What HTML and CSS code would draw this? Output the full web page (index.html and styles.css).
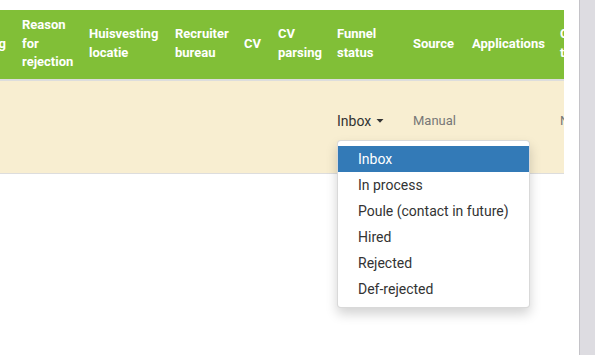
FILE: index.html
```html
<!DOCTYPE html>
<html>
<head>
<meta charset="utf-8">
<link rel="stylesheet" href="styles.css">
</head>
<body>
<div class="page">
  <main class="main">
    <div class="table-wrap">
      <table class="grid">
        <colgroup>
          <col class="c0"><col class="c1"><col class="c2"><col class="c3"><col class="c4"><col class="c5"><col class="c6"><col class="c7"><col class="c8"><col class="c9">
        </colgroup>
        <thead>
          <tr>
            <th class="first">Rating</th>
            <th>Reason for rejection</th>
            <th>Huisvesting locatie</th>
            <th>Recruiter bureau</th>
            <th>CV</th>
            <th>CV parsing</th>
            <th>Funnel status</th>
            <th>Source</th>
            <th>Applications</th>
            <th>Contact tijd</th>
          </tr>
        </thead>
        <tbody>
          <tr>
            <td></td><td></td><td></td><td></td><td></td><td></td>
            <td>
              <div class="dropdown">
                <span class="toggle">Inbox <svg class="caret" width="8" height="4" viewBox="0 0 8 4"><polygon points="0.5,0 7.5,0 4,3.8" fill="#333"/></svg></span>
                <ul class="menu">
                  <li class="active">Inbox</li>
                  <li>In process</li>
                  <li>Poule (contact in future)</li>
                  <li>Hired</li>
                  <li>Rejected</li>
                  <li>Def-rejected</li>
                </ul>
              </div>
            </td>
            <td class="muted">Manual</td>
            <td></td>
            <td class="muted">Nee</td>
          </tr>
        </tbody>
      </table>
    </div>
  </main>
  <div class="scrollbar"></div>
</div>
</body>
</html>
```

FILE: styles.css
```css
html, body {
  margin: 0;
  padding: 0;
  background: #fff;
  font-family: Roboto, "Liberation Sans", sans-serif;
  color: #333;
}

.page {
  display: flex;
  height: 355px;
  overflow: hidden;
}

.main {
  flex: 1;
  padding-top: 10px;
  min-width: 0;
}

.table-wrap {
  width: 564px;
  overflow: hidden;
  height: 345px;
}

.grid {
  border-collapse: collapse;
  table-layout: fixed;
  width: 650px;
  margin-left: -46px;
}

.c0 { width: 60px; }
.c1 { width: 67px; }
.c2 { width: 86px; }
.c3 { width: 69px; }
.c4 { width: 34px; }
.c5 { width: 59px; }
.c6 { width: 76px; }
.c7 { width: 59px; }
.c8 { width: 88px; }
.c9 { width: 52px; }

.grid th {
  background: #81bf37;
  color: #fff;
  font-weight: 700;
  font-size: 13px;
  line-height: 18.6px;
  text-align: left;
  vertical-align: middle;
  padding: 6px 8px 7px 8px;
  border-bottom: 2px solid #dddddd;
  white-space: normal;
}

.grid th.first {
  text-align: right;
}

.grid td {
  background: #f8eed1;
  height: 94px;
  box-sizing: border-box;
  padding: 30px 8px 0 8px;
  vertical-align: top;
  border-bottom: 1px solid #dddddd;
  font-size: 14px;
  line-height: 20px;
  white-space: nowrap;
}

.grid td.muted {
  color: #777;
  font-size: 13px;
}

.dropdown {
  position: relative;
}

.toggle {
  display: inline-block;
  color: #333;
}

.caret {
  margin-left: 1px;
  vertical-align: 3px;
}

.menu {
  position: absolute;
  left: 0;
  top: 29px;
  width: 193px;
  box-sizing: border-box;
  margin: 0;
  padding: 5px 0;
  list-style: none;
  background: #fff;
  border: 1px solid rgba(0, 0, 0, 0.15);
  border-radius: 4px;
  box-shadow: 0 6px 12px rgba(0, 0, 0, 0.175);
  z-index: 10;
}

.menu li {
  padding: 3px 20px;
  font-size: 14px;
  line-height: 20px;
  color: #333;
  white-space: nowrap;
}

.menu li.active {
  background: #337ab7;
  color: #fff;
}

.scrollbar {
  width: 15px;
  flex: none;
  background: #dddce1;
  border-left: 1px solid #c4c3c8;
}
```
